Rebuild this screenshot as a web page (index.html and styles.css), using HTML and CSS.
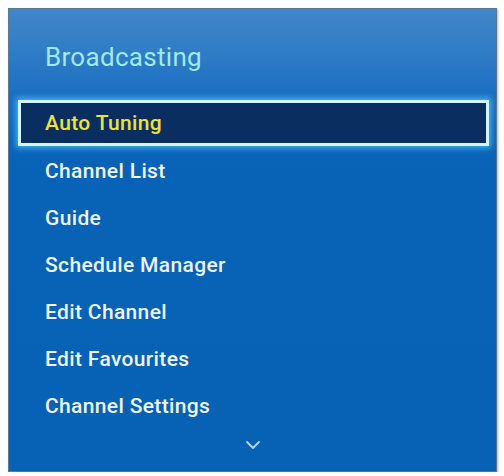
FILE: index.html
```html
<!DOCTYPE html>
<html>
<head>
<meta charset="utf-8">
<link rel="stylesheet" href="styles.css">
</head>
<body>
<div class="panel">
  <div class="title">Broadcasting</div>
  <ul class="menu">
    <li class="item selected">Auto Tuning</li>
    <li class="item">Channel List</li>
    <li class="item">Guide</li>
    <li class="item">Schedule Manager</li>
    <li class="item">Edit Channel</li>
    <li class="item">Edit Favourites</li>
    <li class="item">Channel Settings</li>
  </ul>
  <div class="more">
    <svg width="16" height="10" viewBox="0 0 16 10"><path d="M2 2 L8 8 L14 2" fill="none" stroke="#b9d6f2" stroke-width="1.8" stroke-linecap="round" stroke-linejoin="round"/></svg>
  </div>
</div>
</body>
</html>
```

FILE: styles.css
```css
html, body {
  margin: 0;
  padding: 0;
  background: #ffffff;
}
body {
  padding: 8px 0 0 8px;
  font-family: Roboto, "Liberation Sans", sans-serif;
}
.panel {
  width: 487px;
  height: 462px;
  border: 1px solid #5c7894;
  box-shadow: 1px 1px 2px rgba(60, 90, 120, 0.45);
  background: linear-gradient(to bottom, #4286c8 0px, #2f7cc6 45px, #1c6fc3 85px, #0d64b9 130px, #0862b6 160px, #0761b5 100%);
  display: flex;
  flex-direction: column;
  box-sizing: content-box;
}
.title {
  height: 91px;
  display: flex;
  align-items: center;
  padding-left: 36px;
  padding-top: 4px;
  box-sizing: border-box;
  color: #9eeaf0;
  font-size: 26px;
  letter-spacing: 0.3px;
}
.menu {
  list-style: none;
  margin: 0;
  padding: 0 7px 0 9px;
}
.item {
  height: 47px;
  display: flex;
  align-items: center;
  padding-left: 27px;
  box-sizing: border-box;
  color: #eef4fb;
  font-size: 21px;
  font-weight: 500;
  letter-spacing: 0.35px;
}
.item.selected {
  height: 46px;
  margin-bottom: 1px;
  background: #0b2e60;
  border: 3px solid #d2f6ff;
  padding-left: 24px;
  color: #ece23a;
  box-shadow: 0 0 6px 2px rgba(90, 205, 255, 0.75);
}
.more {
  flex: 1;
  display: flex;
  justify-content: center;
  align-items: flex-start;
  padding-top: 11px;
}
```
